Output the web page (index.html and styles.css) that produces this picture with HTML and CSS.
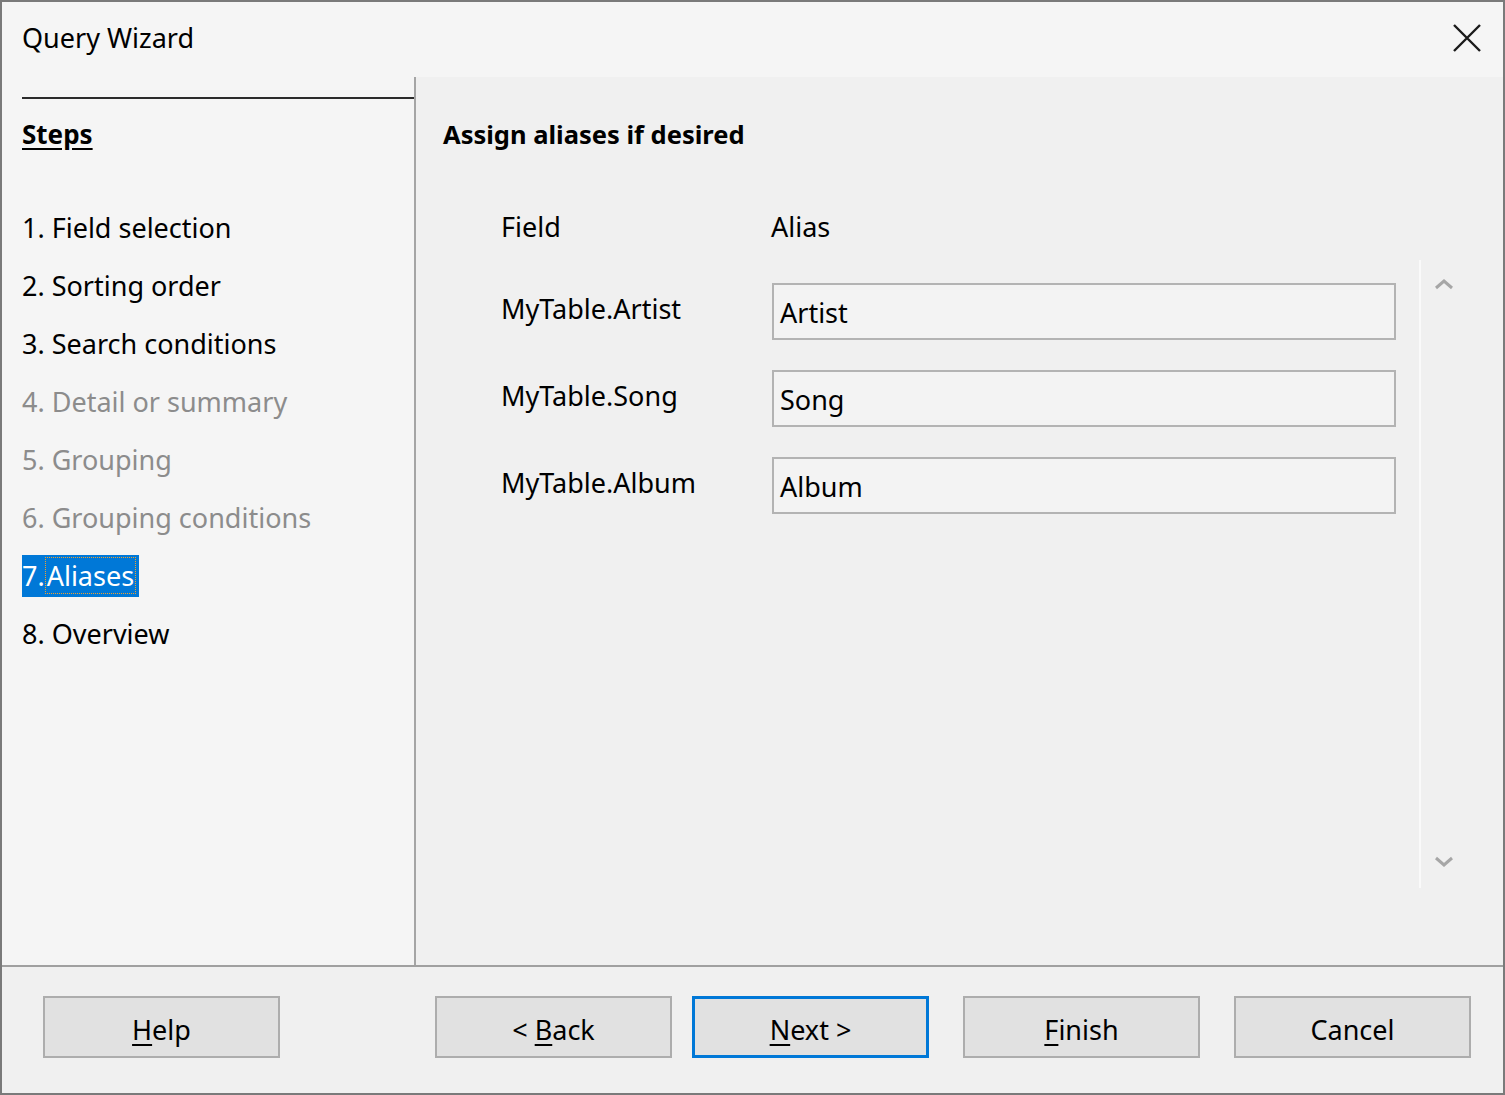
FILE: index.html
```html
<!DOCTYPE html>
<html>
<head>
<meta charset="utf-8">
<link rel="stylesheet" href="styles.css">
</head>
<body>
<div class="window">
  <div class="titlebar">
    <span class="title">Query Wizard</span>
    <svg class="close" width="30" height="30" viewBox="0 0 30 30"><path d="M2 2 L28 28 M28 2 L2 28" stroke="#1a1a1a" stroke-width="2.4" fill="none"/></svg>
  </div>
  <div class="main">
    <div class="steps">
      <div class="rule"></div>
      <div class="steps-title">Steps</div>
      <ul class="step-list">
        <li class="step">1. Field selection</li>
        <li class="step">2. Sorting order</li>
        <li class="step">3. Search conditions</li>
        <li class="step disabled">4. Detail or summary</li>
        <li class="step disabled">5. Grouping</li>
        <li class="step disabled">6. Grouping conditions</li>
        <li class="step"><span class="selected">7.<span class="focus">Aliases</span></span></li>
        <li class="step">8. Overview</li>
      </ul>
    </div>
    <div class="content">
      <div class="heading">Assign aliases if desired</div>
      <div class="colheads">
        <span class="col-field">Field</span>
        <span class="col-alias">Alias</span>
      </div>
      <div class="scroller">
        <div class="rows">
          <div class="row"><span class="label">MyTable.Artist</span><div class="input">Artist</div></div>
          <div class="row"><span class="label">MyTable.Song</span><div class="input">Song</div></div>
          <div class="row"><span class="label">MyTable.Album</span><div class="input">Album</div></div>
        </div>
        <div class="vscroll">
          <svg class="chev" width="20" height="12" viewBox="0 0 20 12"><path d="M2 10 L10 3 L18 10" stroke="#a6a6a6" stroke-width="3" fill="none"/></svg>
          <svg class="chev" width="20" height="12" viewBox="0 0 20 12"><path d="M2 2 L10 9 L18 2" stroke="#a6a6a6" stroke-width="3" fill="none"/></svg>
        </div>
      </div>
    </div>
  </div>
  <div class="buttons">
    <button class="btn help"><u>H</u>elp</button>
    <div class="nav">
      <button class="btn">&lt; <u>B</u>ack</button>
      <button class="btn default"><u>N</u>ext &gt;</button>
      <button class="btn wide-gap"><u>F</u>inish</button>
      <button class="btn wide-gap">Cancel</button>
    </div>
  </div>
</div>
</body>
</html>
```
FILE: styles.css
```css
* { box-sizing: border-box; }
html, body { margin: 0; padding: 0; }
body {
  font-family: "Noto Sans", "Open Sans", sans-serif;
  font-size: 27px;
  color: #000;
  background: #f0f0f0;
}
.window {
  width: 1505px;
  height: 1095px;
  border: 2px solid #7a7a7a;
  display: flex;
  flex-direction: column;
  background: #f0f0f0;
}
.titlebar {
  height: 75px;
  flex: none;
  background: #f5f5f5;
  display: flex;
  align-items: center;
  justify-content: space-between;
  padding: 0 22px 5px 20px;
}
.title { font-size: 27px; line-height: 1; }
.close { margin-right: -1px; margin-top: 1px; }
.main {
  height: 890px;
  flex: none;
  display: flex;
  border-bottom: 2px solid #a0a0a0;
}
.steps {
  width: 414px;
  flex: none;
  background: #f5f5f5;
  border-right: 2px solid #a5a5a5;
  padding-left: 20px;
}
.rule { height: 2px; background: #2b2b2b; margin-top: 20px; }
.steps-title {
  font-weight: bold;
  font-size: 26px;
  text-decoration: underline;
  text-underline-offset: 4px;
  line-height: 36px;
  margin-top: 17px;
}
.step-list { list-style: none; margin: 55px 0 0 0; padding: 0; }
.step { height: 58px; line-height: 42px; }
.step.disabled { color: #8c8c8c; }
.selected {
  display: inline-block;
  background: #0078d7;
  color: #fff;
  line-height: 42px;
  padding-right: 3px;
}
.focus { outline: 1px dotted #f0a030; outline-offset: -1px; padding: 0 2px 0 2px; }
.content {
  flex: 1;
  padding-left: 27px;
  display: flex;
  flex-direction: column;
}
.heading {
  font-weight: bold;
  font-size: 25.5px;
  line-height: 40px;
  margin-top: 37px;
}
.colheads {
  display: flex;
  padding-left: 58px;
  margin-top: 53px;
  line-height: 40px;
}
.col-field { width: 270px; }
.scroller {
  display: flex;
  margin-top: 13px;
  height: 628px;
}
.rows {
  width: 976px;
  padding: 23px 0 0 58px;
  display: flex;
  flex-direction: column;
  gap: 30px;
}
.row { display: flex; align-items: center; height: 57px; }
.label { width: 271px; flex: none; margin-top: -6px; }
.input {
  width: 624px;
  height: 57px;
  border: 2px solid #b3b3b3;
  background: #f3f3f3;
  padding-left: 6px;
  line-height: 56px;
}
.vscroll {
  width: 84px;
  border-left: 2px solid #fafafa;
  display: flex;
  flex-direction: column;
  justify-content: space-between;
  align-items: flex-start;
  padding: 18px 0 20px 13px;
}
.buttons {
  flex: 1;
  display: flex;
  align-items: flex-start;
  padding: 29px 0 0 41px;
}
.nav { display: flex; margin-left: 155px; }
.btn {
  font-family: inherit;
  font-size: 27px;
  color: #000;
  width: 237px;
  height: 62px;
  background: #e1e1e1;
  border: 2px solid #adadad;
  padding: 4px 0 0 0;
  margin: 0;
}
.btn u { text-underline-offset: 4px; }
.btn.default { border: 3px solid #0078d7; margin-left: 20px; }
.btn.wide-gap { margin-left: 34px; }
```
